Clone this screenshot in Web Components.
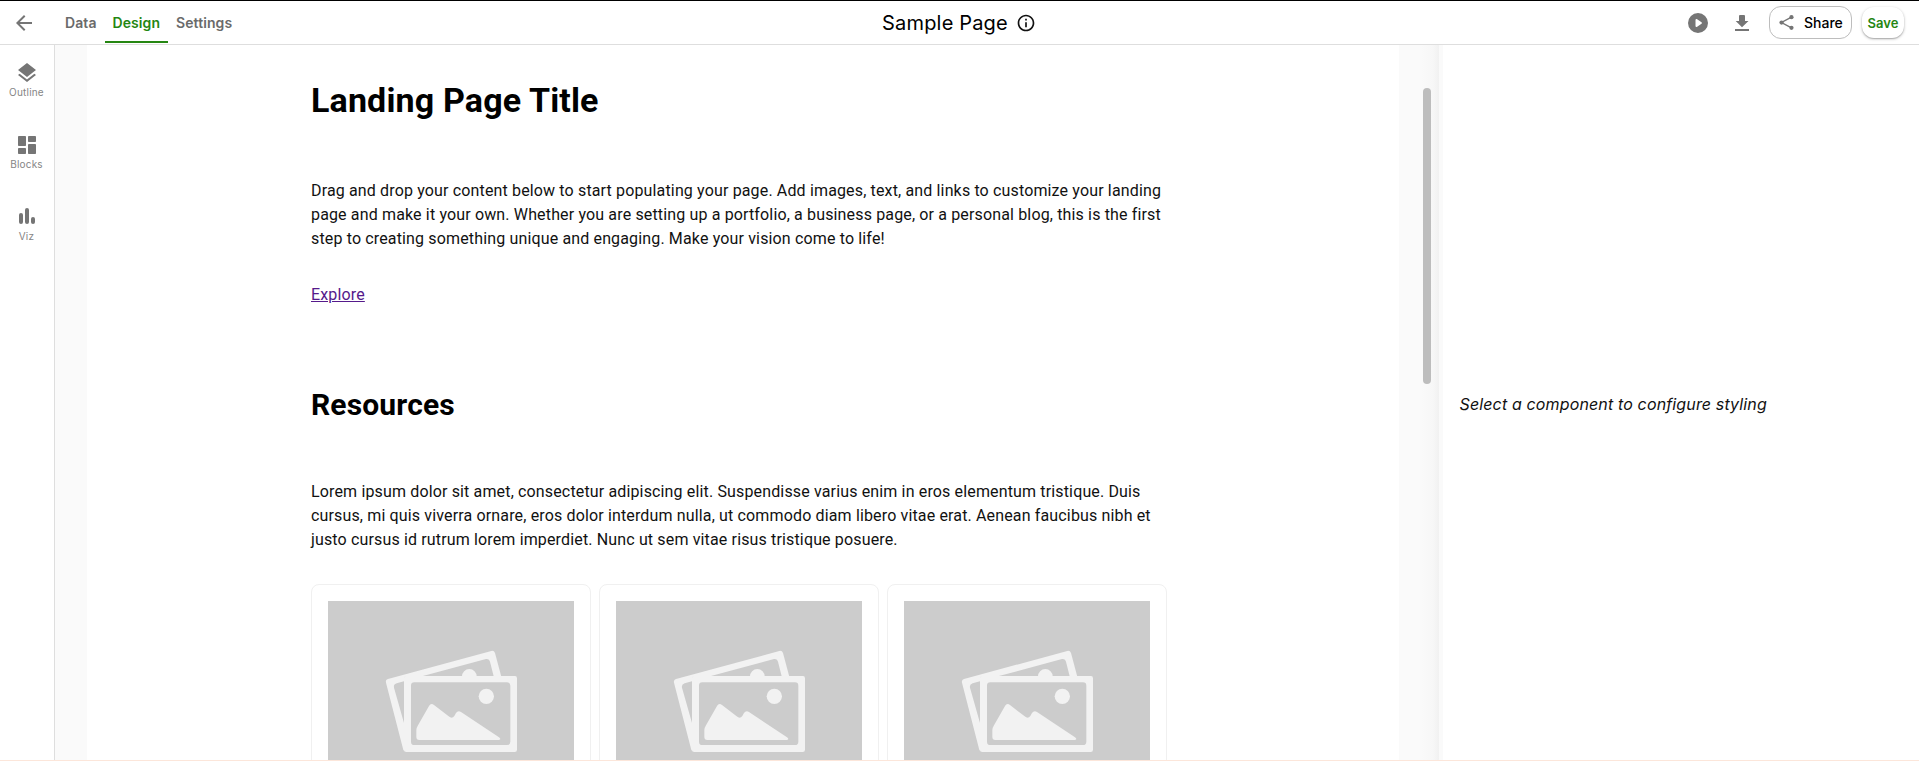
<!DOCTYPE html>
<html lang="en"><head><meta charset="utf-8"><title>Sample Page</title>
<style>html,body{margin:0;height:100%;overflow:hidden;background:#fff}</style></head>
<body><page-builder></page-builder>
<script>
const define=(name,html)=>{
  const t=document.createElement('template');t.innerHTML=html;
  customElements.define(name,class extends HTMLElement{
    constructor(){super();this.attachShadow({mode:'open'}).appendChild(t.content.cloneNode(true));}
  });
};
define('nav-tab',`<style>
:host{display:flex;height:42px;box-sizing:border-box;padding:0 8px;align-items:center;font:600 14px/20px Inter,sans-serif;letter-spacing:.08px;color:#6a6a6a;border-bottom:2px solid transparent;border-top:3px solid transparent;white-space:nowrap}
:host([active]){color:#258612;border-bottom-color:#258612}
</style><slot></slot>`);
define('top-bar',`<style>
:host{display:grid;grid-template-columns:1fr auto 1fr;height:45px;box-sizing:border-box;border-top:1px solid #000;border-bottom:1px solid #dedede;background:#fff;font-family:Inter,sans-serif}
svg{display:block;fill:#757575;flex:none}
.l{display:flex;align-items:flex-start}.back{margin:10px 21px 0 12px}
.c{display:flex;align-items:center;height:43px;padding-right:1px;font-size:20px;letter-spacing:.17px;color:#000}
.c svg{fill:#111;margin-left:8px}
.r{display:flex;align-items:flex-start;justify-content:flex-end}
.play{margin:10px 20px 0 0}.down{margin:10px 15px 0 0}
.share{display:flex;align-items:center;box-sizing:border-box;width:83px;height:33px;margin:5px 10px 0 0;border:1px solid #bdbdbd;border-radius:12px;padding-left:8px;gap:9px;font-size:14px;font-weight:500;color:#000}
.save{display:flex;align-items:center;justify-content:center;width:42px;height:31px;margin:6px 15px 0 0;border-radius:12px;background:#fff;box-shadow:0 1px 3px rgba(0,0,0,.28),0 1px 1px rgba(0,0,0,.14);font-size:13px;font-weight:600;color:#258612}
</style>
<div class="l"><svg class="back" width="24" height="24" viewBox="0 0 24 24"><path d="M20 11H7.83l5.59-5.59L12 4l-8 8 8 8 1.41-1.41L7.83 13H20v-2z"/></svg><nav-tab>Data</nav-tab><nav-tab active>Design</nav-tab><nav-tab>Settings</nav-tab></div>
<div class="c"><span>Sample Page</span><svg width="20" height="20" viewBox="0 0 24 24"><path d="M11 7h2v2h-2zm0 4h2v6h-2zm1-9C6.48 2 2 6.48 2 12s4.480 10 10 10 10-4.480 10-10S17.520 2 12 2zm0 18c-4.410 0-8-3.590-8-8s3.590-8 8-8 8 3.590 8 8-3.590 8-8 8z"/></svg></div>
<div class="r"><svg class="play" width="24" height="24" viewBox="0 0 24 24"><path fill-rule="evenodd" d="M12 2a10 10 0 1 0 0 20 10 10 0 0 0 0-20zM9.500 8.900c0-.7.7-1.100 1.300-.8l4.700 3.100c.5.400.5 1.200 0 1.600l-4.700 3.100c-.6.300-1.300-.1-1.300-.8z"/></svg>
<svg class="down" width="24" height="24" viewBox="0 0 24 24"><path d="M18.500 10H15V5q0-1-1-1h-4q-1 0-1 1v5H5.700L12 16.300zM5 18h14v2H5z"/></svg>
<div class="share"><svg width="17" height="17" viewBox="0 0 24 24"><circle cx="19" cy="4.500" r="3"/><circle cx="5" cy="12" r="3"/><circle cx="19" cy="19.500" r="3"/><path d="M19 4.500L5 12l14 7.500" fill="none" stroke="#757575" stroke-width="2"/></svg>Share</div>
<div class="save">Save</div></div>`);
define('side-item',`<style>
:host{display:flex;flex-direction:column;align-items:center;height:72px;font:10px/12px Inter,sans-serif;letter-spacing:.2px;color:#858585}
::slotted(svg){display:block;width:24px;height:24px;fill:#757575;margin-bottom:1px}
</style><slot name="icon"></slot><span><slot></slot></span>`);
define('side-bar',`<style>:host{display:block;box-sizing:border-box;width:55px;padding:16px 1px 0 0;border-right:1px solid #dedede;background:#fff}</style>
<side-item><svg slot="icon" viewBox="0 0 24 24"><path d="M11.990 18.540l-7.370-5.730L3 14.070l9 7 9-7-1.630-1.270-7.380 5.740zM12 16l7.360-5.730L21 9l-9-7-9 7 1.630 1.270L12 16z"/></svg>Outline</side-item>
<side-item><svg slot="icon" viewBox="0 0 24 24"><rect x="3" y="3" width="8" height="10" rx=".8"/><rect x="13" y="3" width="8" height="6" rx=".8"/><rect x="3" y="15" width="8" height="6" rx=".8"/><rect x="13" y="11" width="8" height="10" rx=".8"/></svg>Blocks</side-item>
<side-item><svg slot="icon" viewBox="0 0 24 24"><rect x="4" y="8" width="4" height="11" rx="2"/><rect x="10" y="3" width="4" height="16" rx="2"/><rect x="16" y="12" width="4" height="7" rx="2"/></svg>Viz</side-item>`);
define('image-card',`<style>
:host{display:block;box-sizing:border-box;width:280px;height:280px;border:1px solid #f0f0f0;border-radius:8px;padding:16px;background:#fff}
svg{display:block;width:246px;height:246px;background:#ccc}
</style><svg viewBox="84 90 738 738"><g fill="#f2f2f2">
<path fill-rule="evenodd" d="M264 324L574 240Q582 238 585 246L604 317H314V541L310 537L258 335Q256 326 264 324ZM366 316L558 264Q568 262 570 272L581 316H530A22 22 0 0 0 486 316ZM312 331L290 337Q280 340 282 350L312 456Z"/>
<path fill-rule="evenodd" d="M319 315H645Q651 315 651 322V536Q651 543 644 543H319Q312 543 312 536V322Q312 315 319 315ZM343 334Q333 334 333 344V512Q333 522 343 522H621Q631 522 631 512V344Q631 334 621 334Z"/>
<circle cx="559" cy="376" r="23"/>
<path d="M349 498V478Q349 471 354 463L387 405Q393 395 402 402L446 436Q456 445 463 435L468 426Q474 417 483 423L597 499Q605 505 597 507H358Q349 507 349 498Z"/></g></svg>`);
define('landing-page',`<style>
:host{display:block;box-sizing:border-box;width:1312px;height:715px;padding:0 228px 0 224px;background:#fff;overflow:hidden;font:16px/24px Roboto,sans-serif;letter-spacing:.15px;color:#111}
h1{font-size:34px;line-height:40px;margin:35px 0 59px;color:#000;font-weight:700}
h2{font-size:30px;line-height:36px;margin:80px 0 57px;color:#000;font-weight:700}
p{margin:0;white-space:nowrap;letter-spacing:.147px}
a{display:block;width:max-content;margin-top:32px;color:#551A8B;text-decoration:underline}
.cards{display:flex;gap:8px;margin-top:32px}
</style><h1>Landing Page Title</h1>
<p>Drag and drop your content below to start populating your page. Add images, text, and links to customize your landing<br>page and make it your own. Whether you are setting up a portfolio, a business page, or a personal blog, this is the first<br>step to creating something unique and engaging. Make your vision come to life!</p>
<a>Explore</a><h2>Resources</h2>
<p>Lorem ipsum dolor sit amet, consectetur adipiscing elit. Suspendisse varius enim in eros elementum tristique. Duis<br>cursus, mi quis viverra ornare, eros dolor interdum nulla, ut commodo diam libero vitae erat. Aenean faucibus nibh et<br>justo cursus id rutrum lorem imperdiet. Nunc ut sem vitae risus tristique posuere.</p>
<div class="cards"><image-card></image-card><image-card></image-card><image-card></image-card></div>`);
define('design-canvas',`<style>
:host{display:flex;flex:none;box-sizing:border-box;width:1388px;height:716px;padding-left:32px;background:#fafafa;overflow:hidden}
.gutter{box-sizing:border-box;width:40px;padding:43px 0 0 24px;background:linear-gradient(90deg,#fafafa 55%,#f7f7f7 85%,#f1f1f1)}
.thumb{width:8px;height:296px;border-radius:4px;background:#bdbdbd}
</style><landing-page></landing-page><div class="gutter"><div class="thumb"></div></div>`);
define('style-panel',`<style>
:host{display:flex;align-items:center;flex:1;padding:2px 0 0 16.5px;font:italic 16px/24px Inter,sans-serif;letter-spacing:.14px;color:#111;background:#fff}
</style><span><slot></slot></span>`);
define('page-builder',`<style>
:host{display:block;height:761px;box-sizing:border-box;border-bottom:1px solid #fce6da;overflow:hidden}
main{display:flex;height:715px}
</style><top-bar></top-bar><main><side-bar></side-bar><design-canvas></design-canvas><style-panel>Select a component to configure styling</style-panel></main>`);
</script></body></html>
